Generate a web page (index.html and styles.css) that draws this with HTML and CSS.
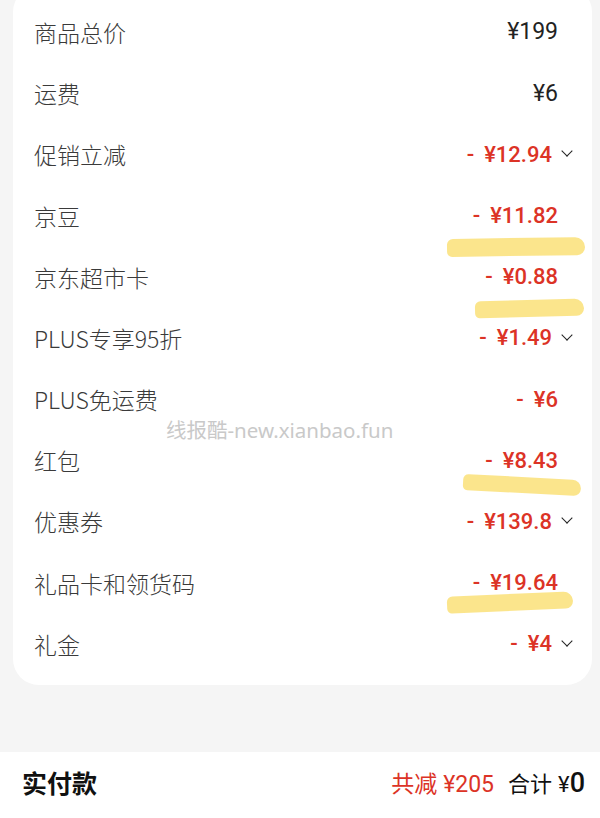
FILE: index.html
```html
<!DOCTYPE html>
<html lang="zh-CN">
<head>
    <meta charset="UTF-8">
    <meta name="viewport" content="width=device-width, initial-scale=1.0">
    <title>订单金额明细</title>
    <link rel="stylesheet" href="styles.css">
</head>
<body>
    <div class="price-card">
        <div class="price-row">
            <span class="label">商品总价</span>
            <span class="amount">¥199</span>
        </div>
        <div class="price-row">
            <span class="label">运费</span>
            <span class="amount">¥6</span>
        </div>
        <div class="price-row">
            <span class="label">促销立减</span>
            <span class="amount discount has-more"><span class="minus">-</span>¥12.94</span>
        </div>
        <div class="price-row">
            <span class="label">京豆</span>
            <span class="amount discount"><span class="minus">-</span>¥11.82</span>
        </div>
        <div class="price-row">
            <span class="label">京东超市卡</span>
            <span class="amount discount"><span class="minus">-</span>¥0.88</span>
        </div>
        <div class="price-row">
            <span class="label">PLUS专享95折</span>
            <span class="amount discount has-more"><span class="minus">-</span>¥1.49</span>
        </div>
        <div class="price-row">
            <span class="label">PLUS免运费</span>
            <span class="amount discount"><span class="minus">-</span>¥6</span>
        </div>
        <div class="price-row">
            <span class="label">红包</span>
            <span class="amount discount"><span class="minus">-</span>¥8.43</span>
        </div>
        <div class="price-row">
            <span class="label">优惠券</span>
            <span class="amount discount has-more"><span class="minus">-</span>¥139.8</span>
        </div>
        <div class="price-row">
            <span class="label">礼品卡和领货码</span>
            <span class="amount discount"><span class="minus">-</span>¥19.64</span>
        </div>
        <div class="price-row">
            <span class="label">礼金</span>
            <span class="amount discount has-more"><span class="minus">-</span>¥4</span>
        </div>

        <!-- highlighter strokes drawn over the card -->
        <span class="marker marker-1"></span>
        <span class="marker marker-2"></span>
        <span class="marker marker-3"></span>
        <span class="marker marker-4"></span>

        <span class="watermark">线报酷-new.xianbao.fun</span>
    </div>

    <footer class="pay-bar">
        <span class="pay-title">实付款</span>
        <div class="pay-summary">
            <span class="saved">共减<span class="num">¥205</span></span>
            <span class="total">合计<span class="num">¥</span><span class="zero">0</span></span>
        </div>
    </footer>
</body>
</html>
```

FILE: styles.css
```css
:root {
    --red: #dc3326;
    --text-color: #333;
    --page-bg: #f5f5f5;
    --marker: #fbe27f;
}

* {
    margin: 0;
    padding: 0;
    box-sizing: border-box;
}

body {
    background-color: var(--page-bg);
    color: var(--text-color);
    font-family: "Noto Sans CJK SC", sans-serif;
    overflow: hidden;
}

.price-card {
    position: relative;
    width: 579px;
    margin: -14px 0 67px 13px;
    padding: 15.4px 19px 10.4px 21px;
    background-color: white;
    border-radius: 26px;
}

.price-row {
    display: flex;
    justify-content: space-between;
    align-items: center;
    height: 61.2px;
}

.label {
    font-size: 23px;
    color: #3a3a3a;
    font-weight: 300;
}

.amount {
    display: flex;
    align-items: center;
    margin-right: 15px;
    font-family: Roboto, "Noto Sans", sans-serif;
    font-size: 23px;
    color: #222;
    position: relative;
    z-index: 1;
}

.amount.discount {
    color: var(--red);
    font-weight: 500;
    font-size: 22px;
}

.amount .minus {
    margin-right: 10px;
}

.amount.has-more {
    margin-right: 0;
}

.amount.has-more::after {
    content: "";
    width: 7px;
    height: 7px;
    margin: -6px 2px 0 11px;
    border-right: 1.6px solid #222;
    border-bottom: 1.6px solid #222;
    transform: rotate(45deg);
}

.marker {
    position: absolute;
    background-color: var(--marker);
    border-radius: 6px 10px 8px 5px;
    opacity: 0.9;
}

.marker-1 {
    left: 434px;
    top: 252px;
    width: 138px;
    height: 18px;
    transform: rotate(-0.8deg);
}

.marker-2 {
    left: 462px;
    top: 314px;
    width: 109px;
    height: 17px;
    transform: rotate(-1.5deg);
}

.marker-3 {
    left: 450px;
    top: 491px;
    width: 118px;
    height: 16px;
    transform: rotate(3deg);
}

.marker-4 {
    left: 434px;
    top: 608px;
    width: 126px;
    height: 17px;
    transform: rotate(-2.5deg);
}

.watermark {
    position: absolute;
    left: 153px;
    top: 428px;
    font-family: "Noto Sans", "Noto Sans CJK SC", sans-serif;
    font-size: 20.5px;
    color: #c9c9c9;
    white-space: nowrap;
}

.pay-bar {
    display: flex;
    justify-content: space-between;
    align-items: center;
    height: 66px;
    padding: 0 15px 6px 22px;
    background-color: white;
}

.pay-title {
    font-size: 25px;
    font-weight: 700;
    color: #111;
}

.pay-summary {
    display: flex;
    align-items: baseline;
    gap: 14px;
}

.saved {
    color: var(--red);
    font-size: 23px;
}

.total {
    color: #111;
    font-size: 22px;
}

.pay-summary .num {
    font-family: Roboto, "Noto Sans", sans-serif;
    margin-left: 6px;
}

.total .zero {
    font-family: Roboto, "Noto Sans", sans-serif;
    font-size: 27px;
    font-weight: 500;
}
```
